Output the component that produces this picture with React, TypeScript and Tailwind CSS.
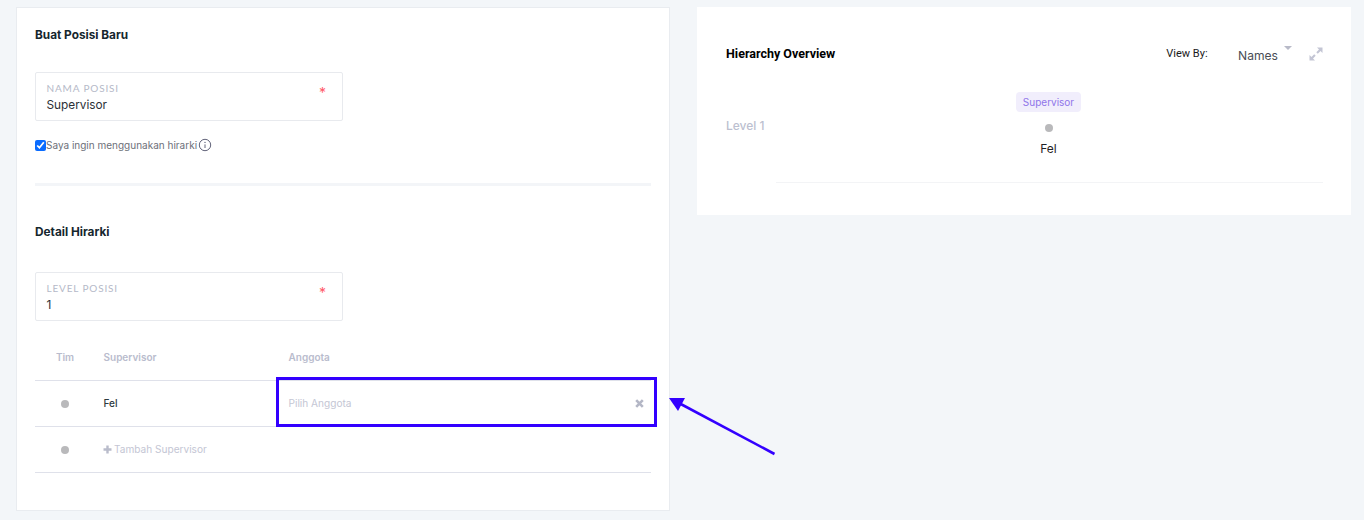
import React from "react";

const inter = "font-['Inter','Liberation_Sans',sans-serif]";

function Field({ label, value }: { label: string; value: string }) {
  return (
    <div className="relative h-[49px] w-[308px] rounded-[2px] border border-[#e8eaee] bg-white pl-[10.5px] pt-[9px]">
      <div className="font-['Lato',sans-serif] text-[10px] leading-[13px] tracking-[0.85px] text-[#b5b9c8]">{label}</div>
      <div className="text-[11.8px] leading-[20px] text-[#2b2f36]">{value}</div>
      <span className="absolute right-[16px] top-[13px] text-[14px] leading-[14px] text-[#ff5a6a]">*</span>
    </div>
  );
}

function Dot() {
  return <span className="block h-[8px] w-[8px] rounded-full bg-[#b9b9bb]" />;
}

export default function App() {
  return (
    <div className={`relative h-[520px] w-[1364px] overflow-hidden bg-[#f3f6f9] ${inter}`}>
      <div className="flex items-start gap-[27px] pl-[16px] pt-[7px]">
        <section className="h-[504px] w-[654px] border border-[#e9ecf0] bg-white px-[18px]">
          <h2 className="mt-[18px] text-[11.8px] font-bold leading-[18px] text-[#15262e]">Buat Posisi Baru</h2>
          <div className="mt-[28px]">
            <Field label="NAMA POSISI" value="Supervisor" />
          </div>
          <label className="mt-[17px] flex h-[14px] items-center">
            <input type="checkbox" defaultChecked readOnly className="m-0 h-[11px] w-[11px] accent-[#0a6cff]" />
            <span className="text-[10px] leading-[14px] text-[#6d7079]">Saya ingin menggunakan hirarki</span>
            <svg width="14" height="14" viewBox="0 0 14 14" fill="none" className="ml-[0.5px]">
              <circle cx="7" cy="7" r="5.7" stroke="#62647a" strokeWidth="1" />
              <path d="M7 6.4V10" stroke="#62647a" strokeWidth="1" />
              <circle cx="7" cy="4.4" r="0.7" fill="#62647a" />
            </svg>
          </label>
          <div className="mt-[31px] h-[3px] w-[616px] bg-[#f3f5f8]" />
          <h2 className="mt-[37px] text-[11.8px] font-bold leading-[18px] text-[#15262e]">Detail Hirarki</h2>
          <div className="mt-[31px]">
            <Field label="LEVEL POSISI" value="1" />
          </div>

          <div className="mt-[14px] w-[616px] text-[10.1px]">
            <div className="flex h-[46px] items-center border-b border-[#dfe1ea] text-[10px] font-semibold text-[#b9bccd]">
              <div className="w-[60px] text-center">Tim</div>
              <div className="ml-[8.500px] w-[185px]">Supervisor</div>
              <div>Anggota</div>
            </div>
            <div className="flex h-[46px] items-center border-b border-[#dfe1ea]">
              <div className="flex w-[60px] justify-center"><Dot /></div>
              <div className="ml-[8.500px] w-[185px] font-medium text-[#2d3a40]">Fel</div>
              <div className="flex-1 text-[#c4c6d4]">Pilih Anggota</div>
              <svg width="9" height="9" viewBox="0 0 9 9" className="mr-[7px]">
                <path d="M1.2 1.2L7.8 7.8M7.8 1.2L1.2 7.8" stroke="#b4b7c6" strokeWidth="2.6" />
              </svg>
            </div>
            <div className="flex h-[46px] items-center border-b border-[#dfe1ea]">
              <div className="flex w-[60px] justify-center"><Dot /></div>
              <div className="ml-[8px] flex items-center gap-[2px] text-[#c4c6d4]">
                <svg width="9" height="9" viewBox="0 0 9 9">
                  <path d="M4.5 0.5V8.5M0.5 4.5H8.5" stroke="#b9bccb" strokeWidth="2.4" />
                </svg>
                <span>Tambah Supervisor</span>
              </div>
            </div>
          </div>
        </section>

        <section className="h-[208px] w-[654px] bg-white pl-[29px] pr-[28px]">
          <div className="flex h-[36px] items-start pt-[38px]">
            <h2 className="font-['Roboto',sans-serif] text-[12.5px] font-bold leading-[18px] text-black">Hierarchy Overview</h2>
            <div className="ml-auto flex items-start">
              <span className="font-['Roboto',sans-serif] text-[11px] leading-[18px] text-[#1a1a1a]">View By:</span>
              <span className="ml-[30.500px] mt-[1px] text-[12.1px] leading-[20px] text-[#4a4d55]">Names</span>
              <span className="ml-[6px] mt-[1px] h-0 w-0 border-x-[4px] border-t-[4px] border-x-transparent border-t-[#b8bac8]" />
              <svg width="14" height="14" viewBox="0 0 14 14" className="ml-[17px] mt-[2px]">
                <path d="M13.500 0.500H8L10 2.500L7.300 5.200L8.800 6.700L11.500 4L13.500 6Z" fill="#c3c5d4" />
                <path d="M0.500 13.500H6L4 11.500L6.700 8.800L5.200 7.300L2.500 10L0.500 8Z" fill="#c3c5d4" />
              </svg>
            </div>
          </div>

          <div className="mt-[47px] flex">
            <div className="w-[50px] pt-[26px] text-[12px] font-medium leading-[16px] text-[#bcbfd0]">Level 1</div>
            <div className="flex h-[91px] w-[547px] flex-col items-center border-b border-[#f3f4f6] pr-[2px]">
              <span className="h-[20px] rounded-[4px] bg-[#f1eefc] px-[7px] text-[10px] leading-[20px] text-[#8f75ea]">Supervisor</span>
              <span className="mt-[12px]"><Dot /></span>
              <span className="mt-[8px] text-[12px] leading-[18px] text-[#1f2226]">Fel</span>
            </div>
          </div>
        </section>
      </div>

      <div className="absolute left-[276px] top-[377px] h-[50px] w-[381px] border-[3px] border-[#3300ff]" />
      <svg width="120" height="70" viewBox="0 0 120 70" className="absolute left-[665px] top-[393px]">
        <path d="M4 5H20L13 18Z" fill="#3300ff" />
        <path d="M12 9L109.500 61" stroke="#3300ff" strokeWidth="2.6" fill="none" />
      </svg>
    </div>
  );
}
